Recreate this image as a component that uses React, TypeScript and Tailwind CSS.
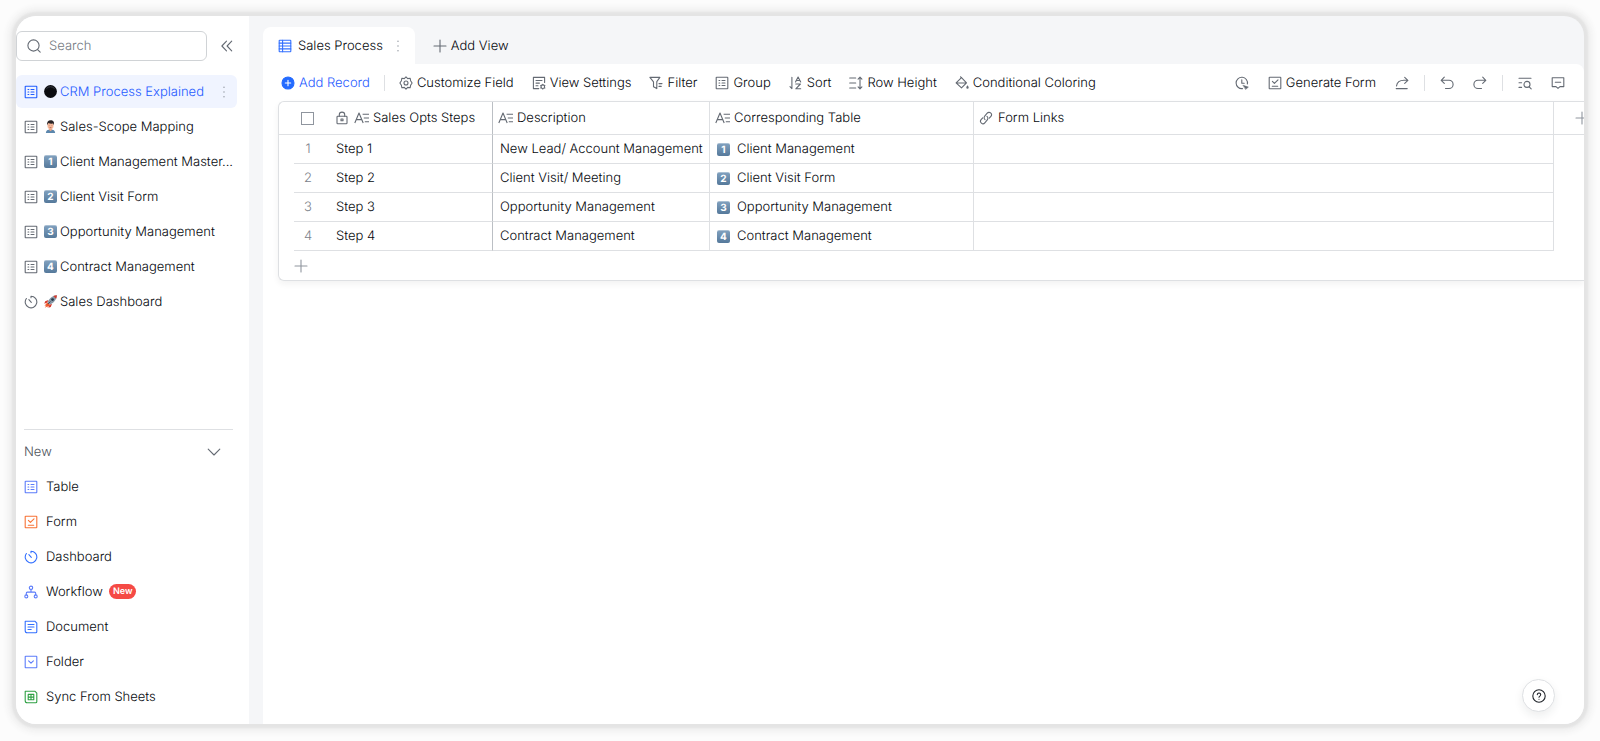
import React, { useState } from 'react';

interface IconProps {
    className?: string;
    children: React.ReactNode;
}

const Icon: React.FC<IconProps> = ({ className = 'text-[#646a73]', children }) => (
    <svg
        aria-hidden="true"
        className={`size-3.5 shrink-0 ${className}`}
        viewBox="0 0 14 14"
        fill="none"
        stroke="currentColor"
        strokeWidth="1.1"
        strokeLinecap="round"
        strokeLinejoin="round"
    >
        {children}
    </svg>
);

const TableIcon = ({ className }: { className?: string }) => (
    <Icon className={className}>
        <rect x="1.2" y="1.2" width="11.6" height="11.6" rx="0.6" />
        <path d="M4 4.5h.8M4 7h.8M4 9.500h.8M7 4.500h3M7 7h3M7 9.500h3" />
    </Icon>
);

const GridIcon = () => (
    <Icon className="text-[#3370ff]">
        <rect x="1.2" y="1.2" width="11.6" height="11.6" rx="0.6" />
        <path d="M4.600 1.200v11.600M1.200 4.100h11.600M1.200 7h11.600M1.200 9.900h11.600" />
    </Icon>
);

const FormIcon = ({ className }: { className?: string }) => (
    <Icon className={className}>
        <rect x="1.2" y="1.2" width="11.6" height="11.6" rx="0.6" />
        <path d="M4.400 5.400l2 2 3.600-3.600M4.300 10.200h5.400" />
    </Icon>
);

const DashboardIcon = ({ className }: { className?: string }) => (
    <Icon className={className}>
        <path d="M7 1.200a5.800 5.800 0 1 1-4.600 2.300M7 1.200v1.600M7.300 7.300L4.900 4.700" />
    </Icon>
);

const WorkflowIcon = () => (
    <Icon className="text-[#5c7cfa]">
        <circle cx="7" cy="2.8" r="1.7" />
        <circle cx="2.3" cy="11.4" r="1.5" />
        <circle cx="11.7" cy="11.4" r="1.5" />
        <path d="M7 4.500v2.600M2.300 9.900V8.200c0-.6.4-1.100 1.100-1.100h7.200c.7 0 1.100.5 1.100 1.100v1.700" />
    </Icon>
);

const DocumentIcon = () => (
    <Icon className="text-[#3370ff]">
        <path d="M1.200 1.200h9.600l2 2v8.600a1 1 0 0 1-1 1H3.200a2 2 0 0 1-2-2zM4 4.500h6M4 7h6M4 9.500h3.200" />
    </Icon>
);

const FolderIcon = () => (
    <Icon className="text-[#5c7cfa]">
        <rect x="1.2" y="1.2" width="11.6" height="11.6" rx="0.6" />
        <path d="M4.600 5.800L7 8.200l2.400-2.400" />
    </Icon>
);

const SheetIcon = () => (
    <Icon className="text-[#2ea043]">
        <path d="M1.200 1.200h9.600l2 2v8.600a1 1 0 0 1-1 1H3.200a2 2 0 0 1-2-2z" />
        <path d="M4.200 4.400h5.600v5.400H4.200zM7 4.400v5.400M4.200 7.100h5.600" />
    </Icon>
);

const TextFieldIcon = () => (
    <svg aria-hidden="true" className="h-3.5 w-4 shrink-0 text-[#646a73]" viewBox="0 0 16 14" fill="none" stroke="currentColor" strokeWidth="1.1" strokeLinejoin="round">
        <path d="M.8 12L5 2l4.200 10M2.300 8.600h5.400M8.600 3.200H15M9.800 7H15M10.800 10.800H15" />
    </svg>
);

const PlusIcon = () => (
    <Icon className="text-[#8f959e]">
        <path d="M7 1v12M1 7h12" />
    </Icon>
);

const MoreIcon = () => (
    <Icon className="text-[#8f959e]">
        <path strokeWidth="1.4" d="M7 2.200v.01M7 7v.01M7 11.800v.01" />
    </Icon>
);

const Keycap = ({ digit }: { digit: string }) => (
    <span className="flex h-[13px] w-[13px] shrink-0 items-center justify-center rounded-xs border-t border-[#a9bfd3] bg-linear-to-b from-[#7f9fbd] to-[#55799b] text-[10px] leading-none font-bold text-white">
        {digit}
    </span>
);

const BlackCircle = () => (
    <svg aria-hidden="true" className="size-[13px] shrink-0" viewBox="0 0 14 14">
        <circle cx="7" cy="7" r="6.9" fill="#0b0c10" />
        <path d="M2.600 4a5.600 5.600 0 0 1 8.800 0" stroke="#3c3f46" fill="none" />
    </svg>
);

const Person = () => (
    <svg aria-hidden="true" className="size-[13px] shrink-0" viewBox="0 0 14 14">
        <path d="M2 14c0-2.600 1.800-3.800 5-3.800s5 1.200 5 3.800z" fill="#5b87ad" />
        <path d="M5.400 8.500h3.200v2.300L7 12.200l-1.600-1.400z" fill="#e8a384" />
        <ellipse cx="7" cy="5.900" rx="3.300" ry="4.100" fill="#f4b99b" />
        <path d="M3.400 5.600C2.900 2 4.500.4 7.200.4s4.200 1.700 3.400 5.200L9.900 3.900C8 4.300 6 4 4.700 3.200z" fill="#2a2325" />
        <path d="M5.600 6v.5M8.400 6v.5M6 8.200h2" stroke="#a3473d" strokeWidth=".7" />
    </svg>
);

const Rocket = () => (
    <svg aria-hidden="true" className="size-[13px] shrink-0" viewBox="0 0 14 14">
        <path d="M3.600 8.200L.5 11.600l2-.2-1.700 2.300 3.100-1.500-.2 1.600 2.700-3.200z" fill="#f0592b" />
        <path d="M4.700 5.400L1.300 6.700.3 9.300l3.400-1.200zM8.600 9.400l-1.300 3.400-2.600.9 1.200-3.300z" fill="#d8392b" />
        <path d="M13.800.3c-4.300.2-8 3.300-10 7.500l2.600 2.600C10.700 8.400 13.700 4.600 13.800.3z" fill="#8797a5" />
        <path d="M13.800.3c-1.300 0-2.500.3-3.700.8l3 2.900c.4-1.200.7-2.400.7-3.700z" fill="#d8392b" />
        <circle cx="9.200" cy="4.900" r="1.500" fill="#253a4d" />
        <path d="M4.200 9.800L7 7" stroke="#3c4c5a" />
    </svg>
);

const pages = [
    { name: 'CRM Process Explained', emoji: <BlackCircle /> },
    { name: 'Sales-Scope Mapping', emoji: <Person /> },
    { name: 'Client Management Master...', emoji: <Keycap digit="1" /> },
    { name: 'Client Visit Form', emoji: <Keycap digit="2" /> },
    { name: 'Opportunity Management', emoji: <Keycap digit="3" /> },
    { name: 'Contract Management', emoji: <Keycap digit="4" /> },
    { name: 'Sales Dashboard', emoji: <Rocket /> },
];

const newItems = [
    { name: 'Table', icon: <TableIcon className="text-[#5c7cfa]" /> },
    { name: 'Form', icon: <FormIcon className="text-[#f77234]" /> },
    { name: 'Dashboard', icon: <DashboardIcon className="text-[#3370ff]" /> },
    { name: 'Workflow', icon: <WorkflowIcon />, badge: 'New' },
    { name: 'Document', icon: <DocumentIcon /> },
    { name: 'Folder', icon: <FolderIcon /> },
    { name: 'Sync From Sheets', icon: <SheetIcon /> },
];

const tools = [
    {
        name: 'Customize Field',
        icon: (
            <Icon>
                <path d="M5.300 2.600L7 .9l1.700 1.700 2.400-.4.500 2.500 1.500 2.300-1.500 2.300-.5 2.500-2.400-.4L7 13.100l-1.700-1.700-2.400.4-.5-2.500L.9 7l1.500-2.300.5-2.500z" />
                <circle cx="7" cy="7" r="2" />
            </Icon>
        ),
    },
    {
        name: 'View Settings',
        icon: (
            <Icon>
                <path d="M12.600 6.500V1.400H1.400v11.200h5.400M4 4.500h6M4 7.100h3.400M4 9.700h2" />
                <circle cx="10.800" cy="10.700" r="1.800" />
                <path d="M10.800 8.300v.4M10.800 12.700v.4M8.700 9.500l.4.200M12.500 11.700l.4.200M8.700 11.900l.4-.2M12.500 9.700l.4-.2" />
            </Icon>
        ),
    },
    {
        name: 'Filter',
        icon: (
            <Icon>
                <path d="M.9 1.400h10L7.800 5.600v7L4.500 10.700V5.800zM10 7.600h3M10 10.400h2.200" />
            </Icon>
        ),
    },
    { name: 'Group', icon: <TableIcon /> },
    {
        name: 'Sort',
        icon: (
            <Icon>
                <path d="M2.900 1.200v11.400L1 10.700M6.500 6l2.600-5 2.600 5M7.400 4.500h3.400M6.800 8h4.600l-4.600 4.800h4.900" />
            </Icon>
        ),
    },
    {
        name: 'Row Height',
        icon: (
            <Icon>
                <path d="M.7 2h6M.7 7h6M.7 12h6M11 1.300v11.400M9.100 3.100L11 1.200l1.900 1.900M9.100 10.900l1.900 1.900 1.900-1.900" />
            </Icon>
        ),
    },
    {
        name: 'Conditional Coloring',
        icon: (
            <Icon>
                <path d="M6.500 1.700l5 5.200-5 5-5.400-5zM1.500 7h9.800M6.500 1.900L5.600.8" />
                <path d="M12.500 9.200c.8 1.100 1.200 1.700 1.200 2.400a1.200 1.200 0 0 1-2.400 0c0-.7.4-1.300 1.200-2.400z" fill="currentColor" stroke="none" />
            </Icon>
        ),
    },
];

const rows = [
    { step: 'Step 1', description: 'New Lead/ Account Management', table: 'Client Management' },
    { step: 'Step 2', description: 'Client Visit/ Meeting', table: 'Client Visit Form' },
    { step: 'Step 3', description: 'Opportunity Management', table: 'Opportunity Management' },
    { step: 'Step 4', description: 'Contract Management', table: 'Contract Management' },
];

const Sidebar: React.FC = () => {
    const [search, setSearch] = useState('');
    const [selected, setSelected] = useState(0);

    return (
        <aside className="flex w-[233px] shrink-0 flex-col bg-white pt-[15px] pb-2.5">
            <div className="flex items-center justify-between pr-[15px]">
                <label className="flex h-[30px] w-[191px] items-center gap-2 rounded-md border border-[#d0d3d6] pl-2.5">
                    <Icon>
                        <circle cx="6.500" cy="6.500" r="5.600" />
                        <path d="M10.600 10.600l2.600 2.600" />
                    </Icon>
                    <input
                        type="text"
                        aria-label="Search"
                        placeholder="Search"
                        value={search}
                        onChange={(e) => setSearch(e.target.value)}
                        className="w-full min-w-0 outline-none placeholder:text-[#747a83]"
                    />
                </label>
                <button aria-label="Collapse sidebar">
                    <Icon>
                        <path d="M6.500 2.200L1.900 7l4.600 4.800M11.700 2.200L7.100 7l4.600 4.800" />
                    </Icon>
                </button>
            </div>

            <nav className="mt-3.5 flex flex-col gap-0.5 pr-3">
                {pages.map((page, i) => (
                    <button
                        key={page.name}
                        onClick={() => setSelected(i)}
                        className={`flex h-[33px] items-center rounded-md pr-1.5 pl-2 text-left whitespace-nowrap ${i === selected ? 'bg-[#f0f4ff] text-[#1f5bff]' : ''}`}
                    >
                        {page.name === 'Sales Dashboard' ? (
                            <DashboardIcon />
                        ) : (
                            <TableIcon className={i === selected ? 'text-[#1f5bff]' : 'text-[#646a73]'} />
                        )}
                        <span className="mr-[3px] ml-1.5">{page.emoji}</span>
                        <span>{page.name}</span>
                        {i === selected && (
                            <span className="ml-auto">
                                <MoreIcon />
                            </span>
                        )}
                    </button>
                ))}
            </nav>

            <div className="mt-auto mr-4 ml-2 border-t border-[#dee0e3] pt-1">
                <button className="flex h-[35px] w-full items-center justify-between pr-3 text-[#4e535b]">
                    New
                    <Icon>
                        <path d="M1.200 4.200L7 10l5.800-5.800" />
                    </Icon>
                </button>
                {newItems.map((item) => (
                    <button key={item.name} className="flex h-[35px] w-full items-center text-left">
                        {item.icon}
                        <span className="ml-2">{item.name}</span>
                        {item.badge && (
                            <span className="ml-1.5 rounded-full bg-[#f54a45] px-1 text-[9px] leading-[15px] font-semibold text-white">
                                {item.badge}
                            </span>
                        )}
                    </button>
                ))}
            </div>
        </aside>
    );
};

const Toolbar: React.FC = () => (
    <div className="flex h-[37px] items-center justify-between pr-[19px] pl-[18px] whitespace-nowrap">
        <div className="flex items-center gap-[18px]">
            <button className="flex items-center gap-1 text-[#1f5bff]">
                <Icon className="text-[#246bff]">
                    <circle cx="7" cy="7" r="6" fill="currentColor" />
                    <path d="M7 4.300v5.400M4.300 7h5.400" stroke="#fff" />
                </Icon>
                Add Record
            </button>
            <div className="-mx-1 h-4 w-px bg-[#dee0e3]" />
            {tools.map((tool) => (
                <button key={tool.name} className="flex items-center gap-1">
                    {tool.icon}
                    {tool.name}
                </button>
            ))}
        </div>
        <div className="flex items-center gap-[19px]">
            <button aria-label="History">
                <Icon>
                    <path d="M12.400 8A5.700 5.700 0 1 0 7.500 12.600M6.800 3.800v3.500h2.400" />
                    <path d="M8.200 9.300l5.200 1.800-2.600 2.200z" fill="currentColor" strokeWidth=".5" />
                </Icon>
            </button>
            <button className="flex items-center gap-1">
                <FormIcon />
                Generate Form
            </button>
            <button aria-label="Share">
                <Icon>
                    <path d="M9.700 1.300L12.900 4.300 9.700 7.300M12.600 4.300H9C5 4.300 2 6.400 1.500 10M1.200 12.600h11" />
                </Icon>
            </button>
            <div className="-mx-1 h-4 w-px bg-[#dee0e3]" />
            <button aria-label="Undo">
                <Icon>
                    <path d="M4.300 1.200L1.200 4.300l3.100 3.100M1.400 4.300H9a4 4 0 0 1 0 8.200H5.500" />
                </Icon>
            </button>
            <button aria-label="Redo">
                <Icon>
                    <path d="M9.700 1.200l3.100 3.100-3.100 3.100M12.600 4.300H5a4 4 0 0 0 0 8.200h3.500" />
                </Icon>
            </button>
            <div className="-mx-1 h-4 w-px bg-[#dee0e3]" />
            <button aria-label="Find">
                <Icon>
                    <path d="M1 2.200h12M1 6.800h2.600M1 11.400h2.600M11.200 10.800l2 2" />
                    <circle cx="9" cy="8.400" r="3" />
                </Icon>
            </button>
            <button aria-label="Comments">
                <Icon>
                    <path d="M1.200 1.800h11.600v8.800H9L7 12.400l-2-1.800H1.200zM4.300 6.200h5.400" />
                </Icon>
            </button>
        </div>
    </div>
);

const RecordTable: React.FC = () => (
    <div className="ml-[15px] overflow-hidden rounded-l-md border border-r-0 border-[#dee0e3] shadow-[0_3px_6px_rgba(31,35,41,0.06)]">
        <table className="w-full table-fixed border-separate border-spacing-0 text-left">
            <colgroup>
                <col className="w-[15px]" />
                <col className="w-[35px]" />
                <col className="w-[164px]" />
                <col className="w-[217px]" />
                <col className="w-[264px]" />
                <col />
                <col className="w-[30px]" />
            </colgroup>
            <thead>
                <tr className="h-[33px] *:border-b *:border-[#dee0e3] *:p-0 *:font-light">
                    <th></th>
                    <th>
                        <input
                            type="checkbox"
                            aria-label="Select all records"
                            className="ml-[7px] block size-[13px] appearance-none border border-[#8f959e]"
                        />
                    </th>
                    <th className="border-r border-r-[#bbbfc4]!">
                        <div className="flex items-center pl-1.5">
                            <Icon>
                                <rect x="2" y="5.200" width="10" height="7.600" rx="0.800" />
                                <path d="M4.300 5.200V3.800a2.700 2.700 0 0 1 5.400 0v1.400M6 8h2v1.800H6z" />
                            </Icon>
                            <span className="mr-[3px] ml-[5px]">
                                <TextFieldIcon />
                            </span>
                            Sales Opts Steps
                        </div>
                    </th>
                    <th className="border-r">
                        <div className="flex items-center gap-[3px] pl-[5px]">
                            <TextFieldIcon />
                            Description
                        </div>
                    </th>
                    <th className="border-r">
                        <div className="flex items-center gap-[3px] pl-[5px]">
                            <TextFieldIcon />
                            Corresponding Table
                        </div>
                    </th>
                    <th className="border-r">
                        <div className="flex items-center gap-[5px] pl-[5px]">
                            <Icon>
                                <path d="M6 8.600a2.400 2.400 0 0 1-.3-3.400l2.500-3a2.400 2.400 0 0 1 3.700 3.100L10.300 7.200" />
                                <path d="M8 5.400a2.400 2.400 0 0 1 .3 3.400l-2.500 3a2.400 2.400 0 0 1-3.700-3.100L3.700 6.800" />
                            </Icon>
                            Form Links
                        </div>
                    </th>
                    <th>
                        <button aria-label="Add field" className="ml-[21px] block">
                            <PlusIcon />
                        </button>
                    </th>
                </tr>
            </thead>
            <tbody>
                {rows.map((row, i) => (
                    <tr key={row.step} className="h-[29px] *:border-[#dee0e3] *:p-0">
                        <td></td>
                        <td className="border-b text-[#7c828b]">
                            <div className="w-7 text-center">{i + 1}</div>
                        </td>
                        <td className="border-r border-b border-r-[#bbbfc4]!">
                            <div className="pl-[7px]">{row.step}</div>
                        </td>
                        <td className="border-r border-b">
                            <div className="pl-[7px]">{row.description}</div>
                        </td>
                        <td className="border-r border-b">
                            <div className="flex items-center gap-[7px] pl-[7px]">
                                <Keycap digit={String(i + 1)} />
                                {row.table}
                            </div>
                        </td>
                        <td className="border-r border-b"></td>
                        <td></td>
                    </tr>
                ))}
            </tbody>
        </table>
        <button aria-label="Add row" className="flex h-[29px] w-full items-center pl-[15px]">
            <PlusIcon />
        </button>
    </div>
);

const App: React.FC = () => {
    return (
        <div className="flex min-h-screen bg-[#fcfcfc] p-4 pb-[17px] font-[Inter,sans-serif] text-[13px] leading-5 font-light text-[#05080d] antialiased **:[text-rendering:geometricPrecision]">
            <div className="relative flex flex-1 overflow-hidden rounded-[20px] bg-[#f5f6f8] shadow-[0_0_2px_4px_#e4e4e4,0_0_6px_8px_#efefef]">
                <Sidebar />

                <main className="ml-3.5 flex min-w-0 flex-1 flex-col pt-[11px]">
                    <div className="flex h-[37px] items-center">
                        <div className="flex h-full items-center rounded-t-lg bg-white pr-2.5 pl-[15px]">
                            <button className="flex items-center gap-1.5">
                                <GridIcon />
                                Sales Process
                            </button>
                            <button aria-label="View options" className="ml-2">
                                <MoreIcon />
                            </button>
                        </div>
                        <button className="ml-[18px] flex items-center gap-1">
                            <Icon>
                                <path d="M7 1v12M1 7h12" />
                            </Icon>
                            Add View
                        </button>
                    </div>

                    <div className="flex-1 rounded-tr-lg bg-white">
                        <Toolbar />
                        <RecordTable />
                    </div>
                </main>

                <button
                    aria-label="Help"
                    className="absolute right-[29px] bottom-3 flex size-[33px] items-center justify-center rounded-full border border-[#dee0e3] bg-white shadow-[0_4px_10px_rgba(31,35,41,0.08)]"
                >
                    <Icon className="text-[#1f2329]">
                        <circle cx="7" cy="7" r="6.200" />
                        <path d="M5.300 5.600a1.700 1.700 0 1 1 2.600 1.500c-.6.400-.9.600-.9 1.200M7 10.200v.1" />
                    </Icon>
                </button>
            </div>
        </div>
    );
};

export default App;
